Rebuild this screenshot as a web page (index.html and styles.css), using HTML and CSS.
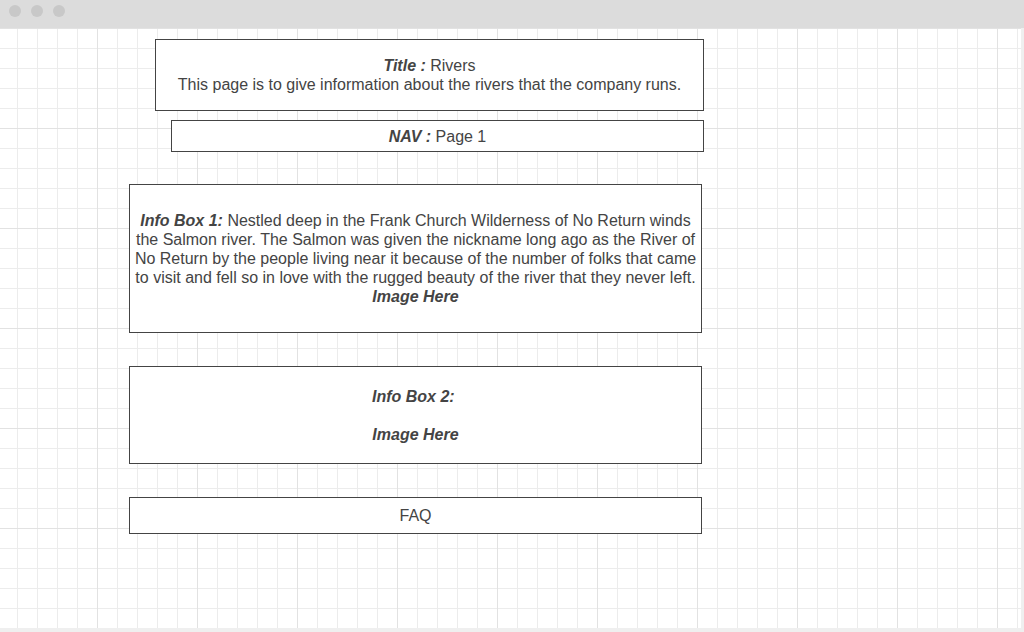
FILE: index.html
```html
<!DOCTYPE html>
<html lang="en">
<head>
<meta charset="utf-8">
<title>Rivers wireframe</title>
<link rel="stylesheet" href="styles.css">
</head>
<body>
<div class="window">
  <div class="titlebar">
    <span class="dot"></span><span class="dot"></span><span class="dot"></span>
  </div>
  <div class="canvas">
    <div class="box box-title">
      <p><b>Title :</b> Rivers<br>This page is to give information about the rivers that the company runs.</p>
    </div>
    <div class="box box-nav">
      <p><b>NAV :</b> Page 1</p>
    </div>
    <div class="box box-info1">
      <p><b>Info Box 1:</b> Nestled deep in the Frank Church Wilderness of No Return winds<br>the Salmon river. The Salmon was given the nickname long ago as the River of<br>No Return by the people living near it because of the number of folks that came<br>to visit and fell so in love with the rugged beauty of the river that they never left.<br><b>Image Here</b></p>
    </div>
    <div class="box box-info2">
      <p><b>Info Box 2:</b>&nbsp;<br><br><b>Image Here</b></p>
    </div>
    <div class="box box-faq">
      <p>FAQ</p>
    </div>
  </div>
</div>
</body>
</html>
```
FILE: styles.css
```css
html, body {
  margin: 0;
  padding: 0;
}
body {
  width: 1024px;
  height: 632px;
  background: #efefef;
  overflow: hidden;
  font-family: "Liberation Sans", Arial, sans-serif;
  color: #444;
}
.window {
  display: flex;
  flex-direction: column;
}
.titlebar {
  height: 28px;
  background: #dcdcdc;
  display: flex;
  align-items: center;
  gap: 10px;
  padding-left: 9px;
  box-sizing: border-box;
}
.dot {
  width: 12px;
  height: 12px;
  border-radius: 50%;
  background: #c8c8c8;
  margin-top: -6px;
}
.canvas {
  width: 1021px;
  height: 600px;
  background-color: #fff;
  background-image:
    linear-gradient(to right, #e2e2e2 1px, transparent 1px),
    linear-gradient(to bottom, #e2e2e2 1px, transparent 1px),
    linear-gradient(to right, #ececec 1px, transparent 1px),
    linear-gradient(to bottom, #ececec 1px, transparent 1px);
  background-size: 100px 100px, 100px 100px, 20px 20px, 20px 20px;
  background-position: -3px 0, -3px 0, -3px 0, -3px 0;
  display: flex;
  flex-direction: column;
  align-items: flex-start;
  padding-top: 11px;
  box-sizing: border-box;
}
.box {
  border: 1px solid #444;
  background: #fff;
  box-sizing: border-box;
  display: flex;
  align-items: center;
  justify-content: center;
  text-align: center;
  font-size: 16px;
  line-height: 19px;
}
.box p {
  margin: 0;
  white-space: nowrap;
}
.box b {
  font-style: italic;
}
.box-title {
  margin-left: 155px;
  width: 549px;
  height: 72px;
}
.box-nav {
  margin-left: 171px;
  margin-top: 9px;
  width: 533px;
  height: 32px;
}
.box-info1 {
  margin-left: 129px;
  margin-top: 32px;
  width: 573px;
  height: 149px;
}
.box-info2 {
  margin-left: 129px;
  margin-top: 33px;
  width: 573px;
  height: 98px;
}
.box-faq {
  margin-left: 129px;
  margin-top: 33px;
  width: 573px;
  height: 37px;
}
```
